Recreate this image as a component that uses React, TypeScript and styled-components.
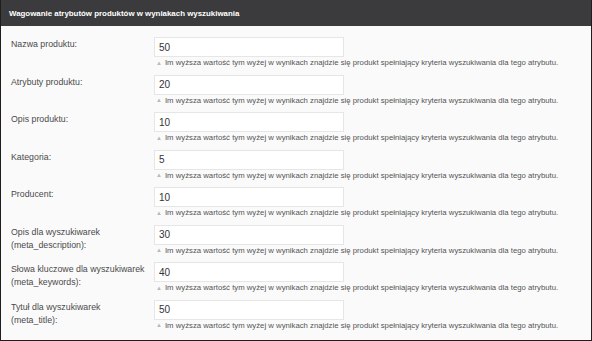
import React from 'react'
import styled, { createGlobalStyle } from 'styled-components'

const GlobalStyle = createGlobalStyle`
  html, body {
    margin: 0;
    padding: 0;
    background: #ffffff;
  }
  body {
    font-family: 'Liberation Sans', Arial, sans-serif;
  }
`

const HELP =
  'Im wyższa wartość tym wyżej w wynikach znajdzie się produkt spełniający kryteria wyszukiwania dla tego atrybutu.'

const fields = [
  { label: ['Nazwa produktu:'], value: '50' },
  { label: ['Atrybuty produktu:'], value: '20' },
  { label: ['Opis produktu:'], value: '10' },
  { label: ['Kategoria:'], value: '5' },
  { label: ['Producent:'], value: '10' },
  { label: ['Opis dla wyszukiwarek', '(meta_description):'], value: '30' },
  { label: ['Słowa kluczowe dla wyszukiwarek', '(meta_keywords):'], value: '40' },
  { label: ['Tytuł dla wyszukiwarek', '(meta_title):'], value: '50' },
]

const App = () => {
  return (
    <>
      <GlobalStyle />
      <Panel>
        <Header>Wagowanie atrybutów produktów w wyniakach wyszukiwania</Header>
        <Body>
          {fields.map((f, i) => (
            <Row key={i}>
              <Label>
                {f.label.map((l, j) => (
                  <span key={j}>{l}</span>
                ))}
              </Label>
              <Field>
                <Input defaultValue={f.value} />
                <Help>
                  <Arrow>▲</Arrow>
                  {HELP}
                </Help>
              </Field>
            </Row>
          ))}
        </Body>
      </Panel>
    </>
  )
}

export default App

const Panel = styled.section`
  width: 592px;
  height: 341px;
  box-sizing: border-box;
  border: 1px solid #1e1e1e;
  border-top: none;
  background: #fafafa;
  overflow: hidden;
`

const Header = styled.h2`
  margin: 0;
  height: 26px;
  padding: 0 8px;
  display: flex;
  align-items: center;
  background: #3b3b3d;
  color: #ffffff;
  font-size: 7.9px;
  font-weight: 700;
`

const Body = styled.div`
  display: flex;
  flex-direction: column;
  padding: 11px 0 0 0;
`

const Row = styled.div`
  display: flex;
  height: 37.5px;
`

const Label = styled.label`
  width: 153px;
  flex-shrink: 0;
  padding: 2px 0 0 10px;
  box-sizing: border-box;
  display: flex;
  flex-direction: column;
  gap: 3px;
  color: #4a4a4a;
  font-size: 8.8px;
`

const Field = styled.div`
  display: flex;
  flex-direction: column;
  gap: 1px;
`

const Input = styled.input`
  width: 190px;
  height: 20px;
  box-sizing: border-box;
  margin: 0;
  border: 1px solid #e6e6e6;
  background: #ffffff;
  padding: 0 4px;
  font-family: 'Liberation Sans', Arial, sans-serif;
  font-size: 10px;
  color: #333333;
  outline: none;
`

const Help = styled.div`
  display: flex;
  align-items: center;
  gap: 3px;
  padding-left: 2px;
  color: #555555;
  font-size: 7.75px;
  white-space: nowrap;
`

const Arrow = styled.span`
  color: #b8b8b8;
  font-size: 6px;
`
